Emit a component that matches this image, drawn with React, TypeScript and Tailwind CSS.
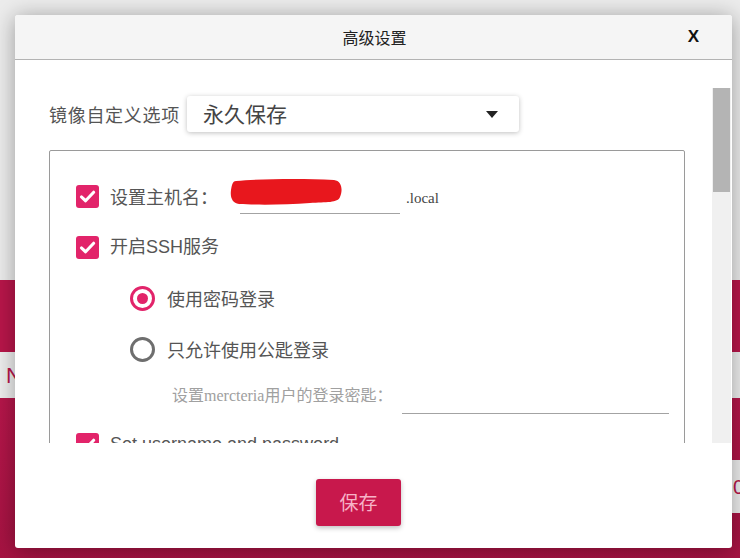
const cjk = "font-['Noto_Sans_CJK_SC',sans-serif]";
const sansCjk = "font-['Liberation_Sans','Noto_Sans_CJK_SC',sans-serif]";
const serifCjk = "font-['Liberation_Serif','Noto_Sans_CJK_SC',serif]";

function Checkbox() {
  return (
    <span className="flex h-[23px] w-[23px] shrink-0 items-center justify-center rounded-[3px] bg-[#e2246a]">
      <svg width="17" height="17" viewBox="0 0 16 16" fill="none">
        <path d="M2.3 8.4 L6.2 12 L13.8 4" stroke="white" strokeWidth="2.9" strokeLinecap="round" strokeLinejoin="round" />
      </svg>
    </span>
  );
}

function Radio({ checked }: { checked: boolean }) {
  return (
    <span
      className={`flex h-[25px] w-[25px] shrink-0 items-center justify-center rounded-full border-[3px] ${
        checked ? "border-[#e2246a]" : "border-[#6e6e6e]"
      }`}
    >
      {checked && <span className="h-[11px] w-[11px] rounded-full bg-[#e2246a]" />}
    </span>
  );
}

function CheckRow({ label, className = "" }: { label: string; className?: string }) {
  return (
    <div className={`flex h-[23px] items-center ${className}`}>
      <Checkbox />
      <span className={`ml-[11px] text-[18px] text-[#555] ${sansCjk}`}>{label}</span>
    </div>
  );
}

function RadioRow({ label, checked, className = "" }: { label: string; checked: boolean; className?: string }) {
  return (
    <div className={`flex h-[25px] items-center pl-[54px] ${className}`}>
      <Radio checked={checked} />
      <span className={`ml-[12px] text-[18px] text-[#555] ${cjk}`}>{label}</span>
    </div>
  );
}

function Background() {
  return (
    <div className="flex h-full flex-col">
      <div className="h-[280px] bg-[#ececec]" />
      <div className="h-[72px] bg-[#b8164a]" />
      <div className="flex h-[46px] items-center bg-[#eeeeee] pl-[6px]">
        <span className={`text-[22px] text-[#b8164a] ${sansCjk}`}>N</span>
      </div>
      <div className="flex flex-1 flex-col bg-gradient-to-b from-[#b5164a] to-[#a51342]">
        <div className="h-[62px]" />
        <div className="ml-[360px] flex h-[53px] items-center bg-[#eeeeee] pl-[373px]">
          <span className={`text-[20px] text-[#b8164a] ${sansCjk}`}>0</span>
        </div>
      </div>
    </div>
  );
}

function Dropdown() {
  return (
    <div className="flex h-[36px] w-[332px] items-center justify-between rounded-[3px] bg-white pl-[16px] pr-[21px] shadow-[0_1px_5px_rgba(0,0,0,0.25)]">
      <span className={`text-[21px] text-[#444] ${cjk}`}>永久保存</span>
      <svg width="12" height="7" viewBox="0 0 12 7">
        <path d="M0 0 H12 L6 7 Z" fill="#222" />
      </svg>
    </div>
  );
}

function SettingsBox() {
  return (
    <div className="mt-[18px] w-[636px] rounded-[2px] border border-[#9a9a9a] pb-[40px] pl-[26px] pt-[34px]">
      <div className="flex h-[23px] items-center">
        <Checkbox />
        <span className={`ml-[11px] text-[18px] text-[#555] ${cjk}`}>设置主机名：</span>
        <div className="relative ml-[22px] h-[34px] w-[160px] border-b-[1.5px] border-[#a3a3a3]">
          <svg className="absolute left-[-10px] top-[-2px]" width="113" height="28" viewBox="0 0 113 28">
            <path
              d="M6 3 C30 1 70 0 104 2 C112 3 113 12 110 19 C108 25 96 24 80 25 C55 27 25 27 9 26 C2 25 0 19 1 12 C2 6 3 3 6 3 Z"
              fill="#e8171d"
            />
          </svg>
        </div>
        <span className={`ml-[6px] mt-[3px] text-[15px] text-[#444] ${serifCjk}`}>.local</span>
      </div>
      <CheckRow label="开启SSH服务" className="mt-[28px]" />
      <RadioRow label="使用密码登录" checked className="mt-[27px]" />
      <RadioRow label="只允许使用公匙登录" checked={false} className="mt-[26px]" />
      <div className="mt-[16px] flex h-[36px] items-center pl-[96px]">
        <span className={`w-[230px] text-[16px] text-[#a0a0a0] ${serifCjk}`}>设置mercteria用户的登录密匙：</span>
        <div className="h-[36px] w-[267px] border-b-[1.5px] border-[#a3a3a3]" />
      </div>
      <CheckRow label="Set username and password" className="mt-[19px]" />
      <RadioRow label="用户名" checked={false} className="mt-[26px]" />
    </div>
  );
}

export default function App() {
  return (
    <div className="relative h-[558px] w-[740px] overflow-hidden">
      <Background />
      <div className="absolute left-[15px] top-[15px] flex h-[533px] w-[717px] flex-col rounded-[3px] bg-white shadow-[0_2px_22px_rgba(0,0,0,0.35)]">
        <div className="relative flex h-[45px] shrink-0 items-center justify-center rounded-t-[3px] border-b border-[#b3b3b3] bg-[#f5f5f5]">
          <span className={`pl-[2px] text-[16px] text-[#222] ${cjk}`}>高级设置</span>
          <span className={`absolute right-[33px] text-[17px] font-bold text-[#111] ${sansCjk}`}>X</span>
        </div>
        <div className="mt-[28px] flex h-[355px] shrink-0">
          <div className="flex-1 overflow-hidden pl-[34px] pt-[8px]">
            <div className="flex items-center">
              <span className={`mr-[7px] text-[18px] tracking-[0.7px] text-[#555] ${cjk}`}>镜像自定义选项</span>
              <Dropdown />
            </div>
            <SettingsBox />
          </div>
          <div className="mr-[1px] w-[19px] bg-[#f0f0f0]">
            <div className="mx-[1px] h-[104px] bg-[#b4b4b4]" />
          </div>
        </div>
        <div className="flex-1 pl-[301px] pt-[36px]">
          <button
            type="button"
            className={`h-[47px] w-[85px] rounded-[3px] bg-[#c8184c] text-[19px] text-[#f7b3c7] shadow-[0_2px_5px_rgba(0,0,0,0.25)] ${cjk}`}
          >
            保存
          </button>
        </div>
      </div>
    </div>
  );
}
